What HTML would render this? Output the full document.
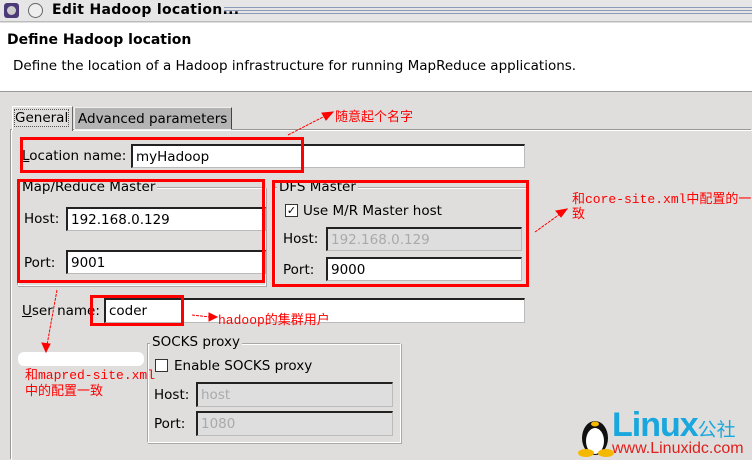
<!DOCTYPE html>
<html><head><meta charset="utf-8"><style>
*{margin:0;padding:0;box-sizing:border-box}
body{width:752px;height:458px;overflow:hidden;background:#dfdedc;font-family:"DejaVu Sans","Liberation Sans",sans-serif;font-size:13px;color:#000;position:relative}
.a{position:absolute;white-space:nowrap}
.in{position:absolute;background:#fff;border:1px solid #bbb;border-top:2px solid #222;border-left:2px solid #222;padding:2px 3px;font-size:13.5px;line-height:18px}
.dis{background:#dedede;color:#aaa}
.red{position:absolute;border:3px solid #f00}
.grp{position:absolute;border:1px solid #a8a8a8;border-right-color:#fff;border-bottom-color:#fff;box-shadow:inset 1px 1px 0 #fff, 1px 1px 0 #a8a8a8}
.gl{position:absolute;background:#dfdedc;padding:0 2px;font-size:13.5px}
.cn{color:#f00;font-family:"Liberation Mono","WenQuanYi Zen Hei","Noto Sans CJK SC",monospace;font-size:13px}
</style></head><body>
<div class="a" style="left:0;top:0;width:752px;height:22px;background:#e6e6e6;border-bottom:1px solid #bbb"></div>
<div class="a" style="left:4px;top:3px;width:15px;height:15px;background:#4a3a78;border-radius:3px"></div>
<div class="a" style="left:7px;top:6px;width:9px;height:9px;background:#ccc;border-radius:50%"></div>
<div class="a" style="left:28px;top:3px;width:15px;height:15px;border:1px solid #666;border-radius:50%;background:#eee"></div>
<div class="a" style="left:224px;top:7px;width:528px;height:8px;background:repeating-linear-gradient(#8a9ab8 0 1px,#e6e6e6 1px 3px)"></div>
<div class="a" style="left:52px;top:2px;font-weight:bold;font-size:14px;letter-spacing:0.3px">Edit Hadoop location...</div>
<div class="a" style="left:0;top:23px;width:752px;height:69px;background:#fff;border-bottom:1px solid #999"></div>
<div class="a" style="left:7px;top:32px;font-weight:bold;font-size:14px">Define Hadoop location</div>
<div class="a" style="left:13px;top:58px;font-size:13.5px">Define the location of a Hadoop infrastructure for running MapReduce applications.</div>
<div class="a" style="left:11px;top:130px;width:741px;height:330px;border-left:1px solid #fff;border-top:1px solid #fff;box-shadow:-1px -1px 0 #999"></div>
<div class="a" style="left:12px;top:106px;width:61px;height:25px;background:#dfdedc;border:1px solid #fff;border-bottom:none;border-right:1px solid #666"></div>
<div class="a" style="left:15px;top:110px;font-size:13.5px;outline:1px dotted #555">General</div>
<div class="a" style="left:74px;top:107px;width:158px;height:23px;background:#b4b4b4;border:1px solid #eee;border-right:1px solid #444"></div>
<div class="a" style="left:78px;top:111px;font-size:13.5px">Advanced parameters</div>

<div class="a" style="left:22px;top:148px;font-size:13.5px"><u>L</u>ocation name:</div>
<div class="in" style="left:131px;top:144px;width:394px;height:24px">myHadoop</div>
<div class="red" style="left:20px;top:137px;width:284px;height:36px"></div>

<div class="grp" style="left:17px;top:187px;width:249px;height:99px"></div>
<div class="gl" style="left:20px;top:179px">Map/Reduce Master</div>
<div class="a" style="left:24px;top:211px;font-size:13.5px">Host:</div>
<div class="in" style="left:66px;top:207px;width:200px;height:24px">192.168.0.129</div>
<div class="a" style="left:24px;top:255px;font-size:13.5px">Port:</div>
<div class="in" style="left:66px;top:250px;width:200px;height:24px">9001</div>
<div class="red" style="left:17px;top:179px;width:248px;height:104px"></div>

<div class="grp" style="left:274px;top:187px;width:254px;height:99px"></div>
<div class="gl" style="left:277px;top:179px">DFS Master</div>
<div class="a" style="left:285px;top:204px;width:13px;height:13px;border:1px solid #333;background:#fff;font-size:11px;line-height:11px;text-align:center">✓</div>
<div class="a" style="left:303px;top:203px;font-size:13.5px">Use M/R Master host</div>
<div class="a" style="left:283px;top:231px;font-size:13.5px">Host:</div>
<div class="in dis" style="left:326px;top:227px;width:196px;height:24px">192.168.0.129</div>
<div class="a" style="left:283px;top:262px;font-size:13.5px">Port:</div>
<div class="in" style="left:326px;top:257px;width:196px;height:24px">9000</div>
<div class="red" style="left:272px;top:180px;width:257px;height:107px"></div>

<div class="a" style="left:22px;top:303px;font-size:13.5px"><u>U</u>ser name:</div>
<div class="in" style="left:104px;top:298px;width:421px;height:25px">coder</div>
<div class="red" style="left:90px;top:295px;width:94px;height:31px"></div>

<div class="grp" style="left:147px;top:343px;width:254px;height:100px"></div>
<div class="gl" style="left:150px;top:334px">SOCKS proxy</div>
<div class="a" style="left:155px;top:359px;width:13px;height:13px;border:1px solid #333;background:#fff"></div>
<div class="a" style="left:174px;top:358px;font-size:13.5px">Enable SOCKS proxy</div>
<div class="a" style="left:154px;top:387px;font-size:13.5px">Host:</div>
<div class="in dis" style="left:196px;top:382px;width:197px;height:25px">host</div>
<div class="a" style="left:154px;top:416px;font-size:13.5px">Port:</div>
<div class="in dis" style="left:196px;top:411px;width:197px;height:25px">1080</div>

<div class="a cn" style="left:335px;top:106px">随意起个名字</div>
<div class="a cn" style="left:572px;top:192px;line-height:15px">和core-site.xml中配置的一<br>致</div>
<div class="a cn" style="left:218px;top:309px">hadoop的集群用户</div>
<div class="a" style="left:18px;top:352px;width:126px;height:14px;background:#fff;border-radius:6px"></div>
<div class="a cn" style="left:25px;top:368px;line-height:16px">和mapred-site.xml<br>中的配置一致</div>
<svg class="a" style="left:0;top:0" width="752" height="458">
<g stroke="#f00" fill="#f00" stroke-width="1">
<line x1="288" y1="135" x2="325" y2="116" stroke-dasharray="3,1"/><polygon points="333,112 322,113 326,120"/>
<line x1="535" y1="232" x2="560" y2="214" stroke-dasharray="3,1"/><polygon points="567,209 556,211 561,217"/>
<line x1="192" y1="315" x2="210" y2="317" stroke-dasharray="3,1"/><polygon points="217,317 209,313 209,321"/>
<line x1="57" y1="290" x2="47" y2="345" stroke-dasharray="3,1"/><polygon points="46,352 42,343 50,344"/>
</g></svg>
<svg class="a" style="left:578px;top:408px" width="40" height="50"><ellipse cx="17" cy="30" rx="13" ry="17" fill="#111"/><ellipse cx="17" cy="33" rx="9" ry="13" fill="#fff"/><ellipse cx="17" cy="16" rx="4" ry="2.5" fill="#f5b800"/><ellipse cx="8" cy="45" rx="8" ry="4" fill="#f5b800"/><ellipse cx="28" cy="45" rx="8" ry="4" fill="#f5b800"/></svg>
<div class="a" style="left:612px;top:408px;font-family:'Liberation Sans',sans-serif;font-weight:bold;font-size:34px;color:#1aa7dd;letter-spacing:-1px;line-height:34px">Linux<span style="font-size:19px;font-family:'WenQuanYi Zen Hei',sans-serif;font-weight:normal;letter-spacing:0">公社</span></div>
<div class="a" style="left:612px;top:440px;font-family:'Liberation Sans',sans-serif;font-size:16px;color:#e0201c;line-height:18px">www.Linuxidc.com</div>
</body></html>
